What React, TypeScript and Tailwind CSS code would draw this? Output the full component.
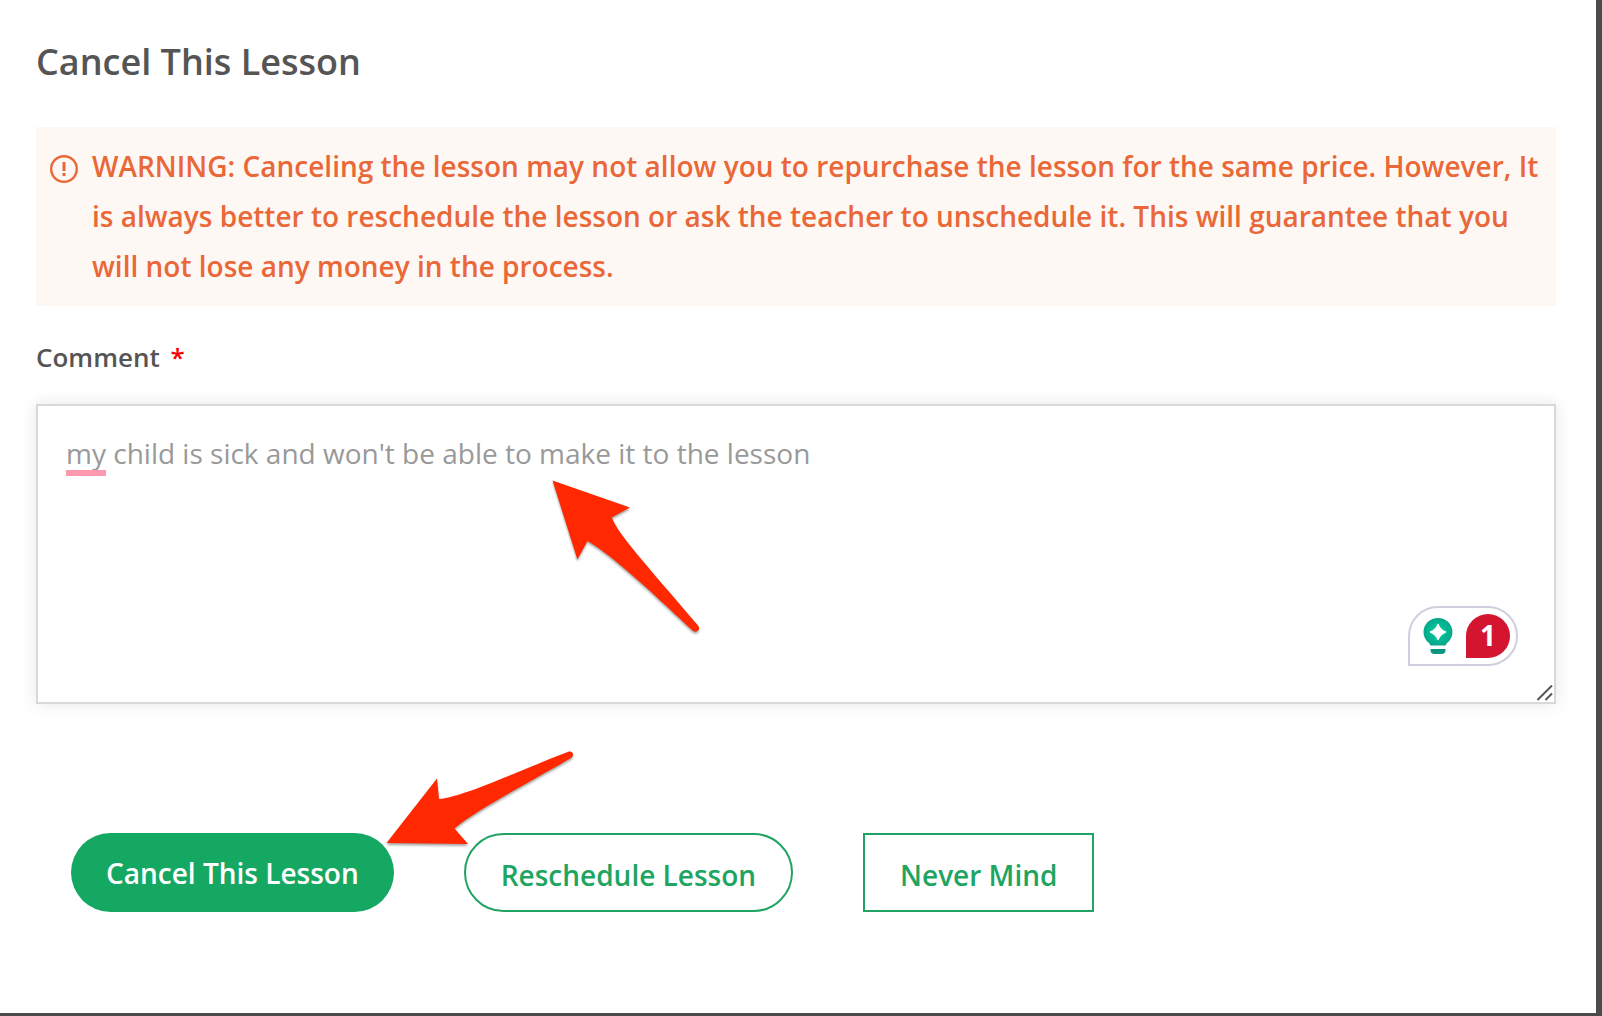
import { useState } from 'react';

export default function App() {
  const [comment, setComment] = useState("my child is sick and won't be able to make it to the lesson");

  return (
    <div className="flex min-h-screen bg-[#4b4b4b] pr-1.5 pb-[3px] font-['Open_Sans',sans-serif]">
      <main className="min-w-0 flex-1 bg-white px-9 pt-[38px] pr-10 pb-24">
        <h1 className="text-[36px] leading-[48px] font-semibold text-[#555]">Cancel This Lesson</h1>

        <div
          role="alert"
          className="mt-[41px] flex gap-3.5 bg-[#fef8f5] px-3.5 pt-3.5 pb-[15px] text-[28px] leading-[50px] font-semibold text-[#ea6838]"
        >
          <WarningIcon />
          <p className="min-w-0 flex-1">
            WARNING: Canceling the lesson may not allow you to repurchase the lesson for the same price. However, It is
            always better to reschedule the lesson or ask the teacher to unschedule it. This will guarantee that you
            will not lose any money in the process.
          </p>
        </div>

        <form onSubmit={(e) => e.preventDefault()}>
          <label htmlFor="comment" className="mt-[33px] block text-[26px] leading-9 font-semibold text-[#555]">
            Comment <span className="ml-1 text-[#f00]">*</span>
          </label>

          <div className="relative mt-[29px]">
            <textarea
              id="comment"
              required
              spellCheck={false}
              value={comment}
              onChange={(e) => setComment(e.target.value)}
              className="block h-[300px] w-full resize-none border-2 border-[#d9d9d9] bg-white px-7 py-[22px] text-[28px] leading-[50px] text-[#999] shadow-[0_0_16px_rgba(0,0,0,0.1)] outline-none"
            />
            <span className="pointer-events-none absolute top-[66px] left-[30px] h-1.5 w-10 bg-[#ff99ad]" />
            <GrammarBadge count={1} />
            <ResizeGrip />
            <CommentArrow />
          </div>

          <div className="relative mt-[129px] flex flex-wrap gap-[70px] pl-[35px] text-[28px] leading-[38px] font-semibold">
            <button type="submit" className="h-[79px] rounded-full bg-[#15a862] px-[35px] text-white">
              Cancel This Lesson
            </button>
            <button
              type="button"
              className="h-[79px] rounded-full border-2 border-[#22a365] px-[35px] pt-1 text-[#1ea562]"
            >
              Reschedule Lesson
            </button>
            <button type="button" className="h-[79px] border-2 border-[#22a365] px-[35px] pt-1 text-[#1ea562]">
              Never Mind
            </button>
            <CancelArrow />
          </div>
        </form>
      </main>
    </div>
  );
}

function WarningIcon() {
  return (
    <svg className="mt-3.5 h-7 w-7 shrink-0" viewBox="0 0 28 28" fill="none" aria-hidden="true">
      <circle cx="14" cy="14" r="12.8" stroke="currentColor" strokeWidth="2.400" />
      <path d="M14 7v9M14 18v3" stroke="currentColor" strokeWidth="3" />
    </svg>
  );
}

function GrammarBadge({ count }: { count: number }) {
  return (
    <div className="absolute right-[38px] bottom-[38px] flex h-[60px] w-[110px] items-center justify-between rounded-full rounded-bl-none border-2 border-[#cfcfdd] bg-white pr-1.5 pl-[13px]">
      <svg className="h-9 w-[30px]" viewBox="0 0 30 36" aria-hidden="true">
        <defs>
          <radialGradient id="bulb" cx="0.5" cy="0.5" r="0.6">
            <stop offset="0.3" stopColor="#00c39a" />
            <stop offset="1" stopColor="#0a9d84" />
          </radialGradient>
        </defs>
        <path
          d="M15 0C6.800 0 .5 6.300 .5 14c0 4.800 2.200 8.500 5.500 11 .6.500 1 1.500 1.300 2.500h15.400c.3-1 .7-2 1.300-2.500 3.300-2.500 5.500-6.200 5.500-11C29.500 6.300 23.200 0 15 0z"
          fill="url(#bulb)"
        />
        <path d="M7.500 31h15v1a4 4 0 0 1-4 4h-7a4 4 0 0 1-4-4z" fill="#0a957e" />
        <path
          d="M15 6.500c1.500 4.200 3.300 6 7.500 7.500-4.200 1.500-6 3.300-7.500 7.500-1.500-4.200-3.300-6-7.500-7.500 4.200-1.500 6-3.300 7.500-7.500z"
          fill="#fff"
          stroke="#fff"
          strokeWidth="1.500"
          strokeLinejoin="round"
        />
      </svg>
      <span className="flex h-11 w-11 items-center justify-center rounded-full rounded-bl-none bg-[#d41530] pb-0.5 text-[28px] leading-none font-bold text-white">
        {count}
      </span>
    </div>
  );
}

function ResizeGrip() {
  return (
    <svg
      className="pointer-events-none absolute right-[3px] bottom-[3px] h-4 w-4"
      viewBox="0 0 16 16"
      stroke="#555"
      strokeWidth="2"
      aria-hidden="true"
    >
      <path d="M.5 15 15 .5M8.500 15 15 8.500" />
    </svg>
  );
}

function CommentArrow() {
  return (
    <svg
      className="pointer-events-none absolute top-[76px] left-[516px] h-[154px] w-[148px] drop-shadow-[0_2px_1px_rgba(0,0,0,0.35)]"
      viewBox="0 0 148 154"
      aria-hidden="true"
    >
      <path
        d="M.5 .5 78 27.500 59.800 37.500C66 54 92 82 146 145.500Q148 148 146.500 150Q143.500 153 140.500 150.500C110 122 62 76 35.500 61L25.400 79.500Z"
        fill="#ff2800"
      />
    </svg>
  );
}

function CancelArrow() {
  return (
    <svg
      className="pointer-events-none absolute -top-[83px] left-[350px] h-24 w-[188px] drop-shadow-[0_2px_1px_rgba(0,0,0,0.35)]"
      viewBox="0 0 188 96"
      aria-hidden="true"
    >
      <path
        d="M.5 93 51 28.500 53 49C80 46 134 20 183 1.500Q186 1 187 3.500Q187.500 6 185 8C135 37 87 62 68.500 78.500L82 94Z"
        fill="#ff2800"
      />
    </svg>
  );
}
